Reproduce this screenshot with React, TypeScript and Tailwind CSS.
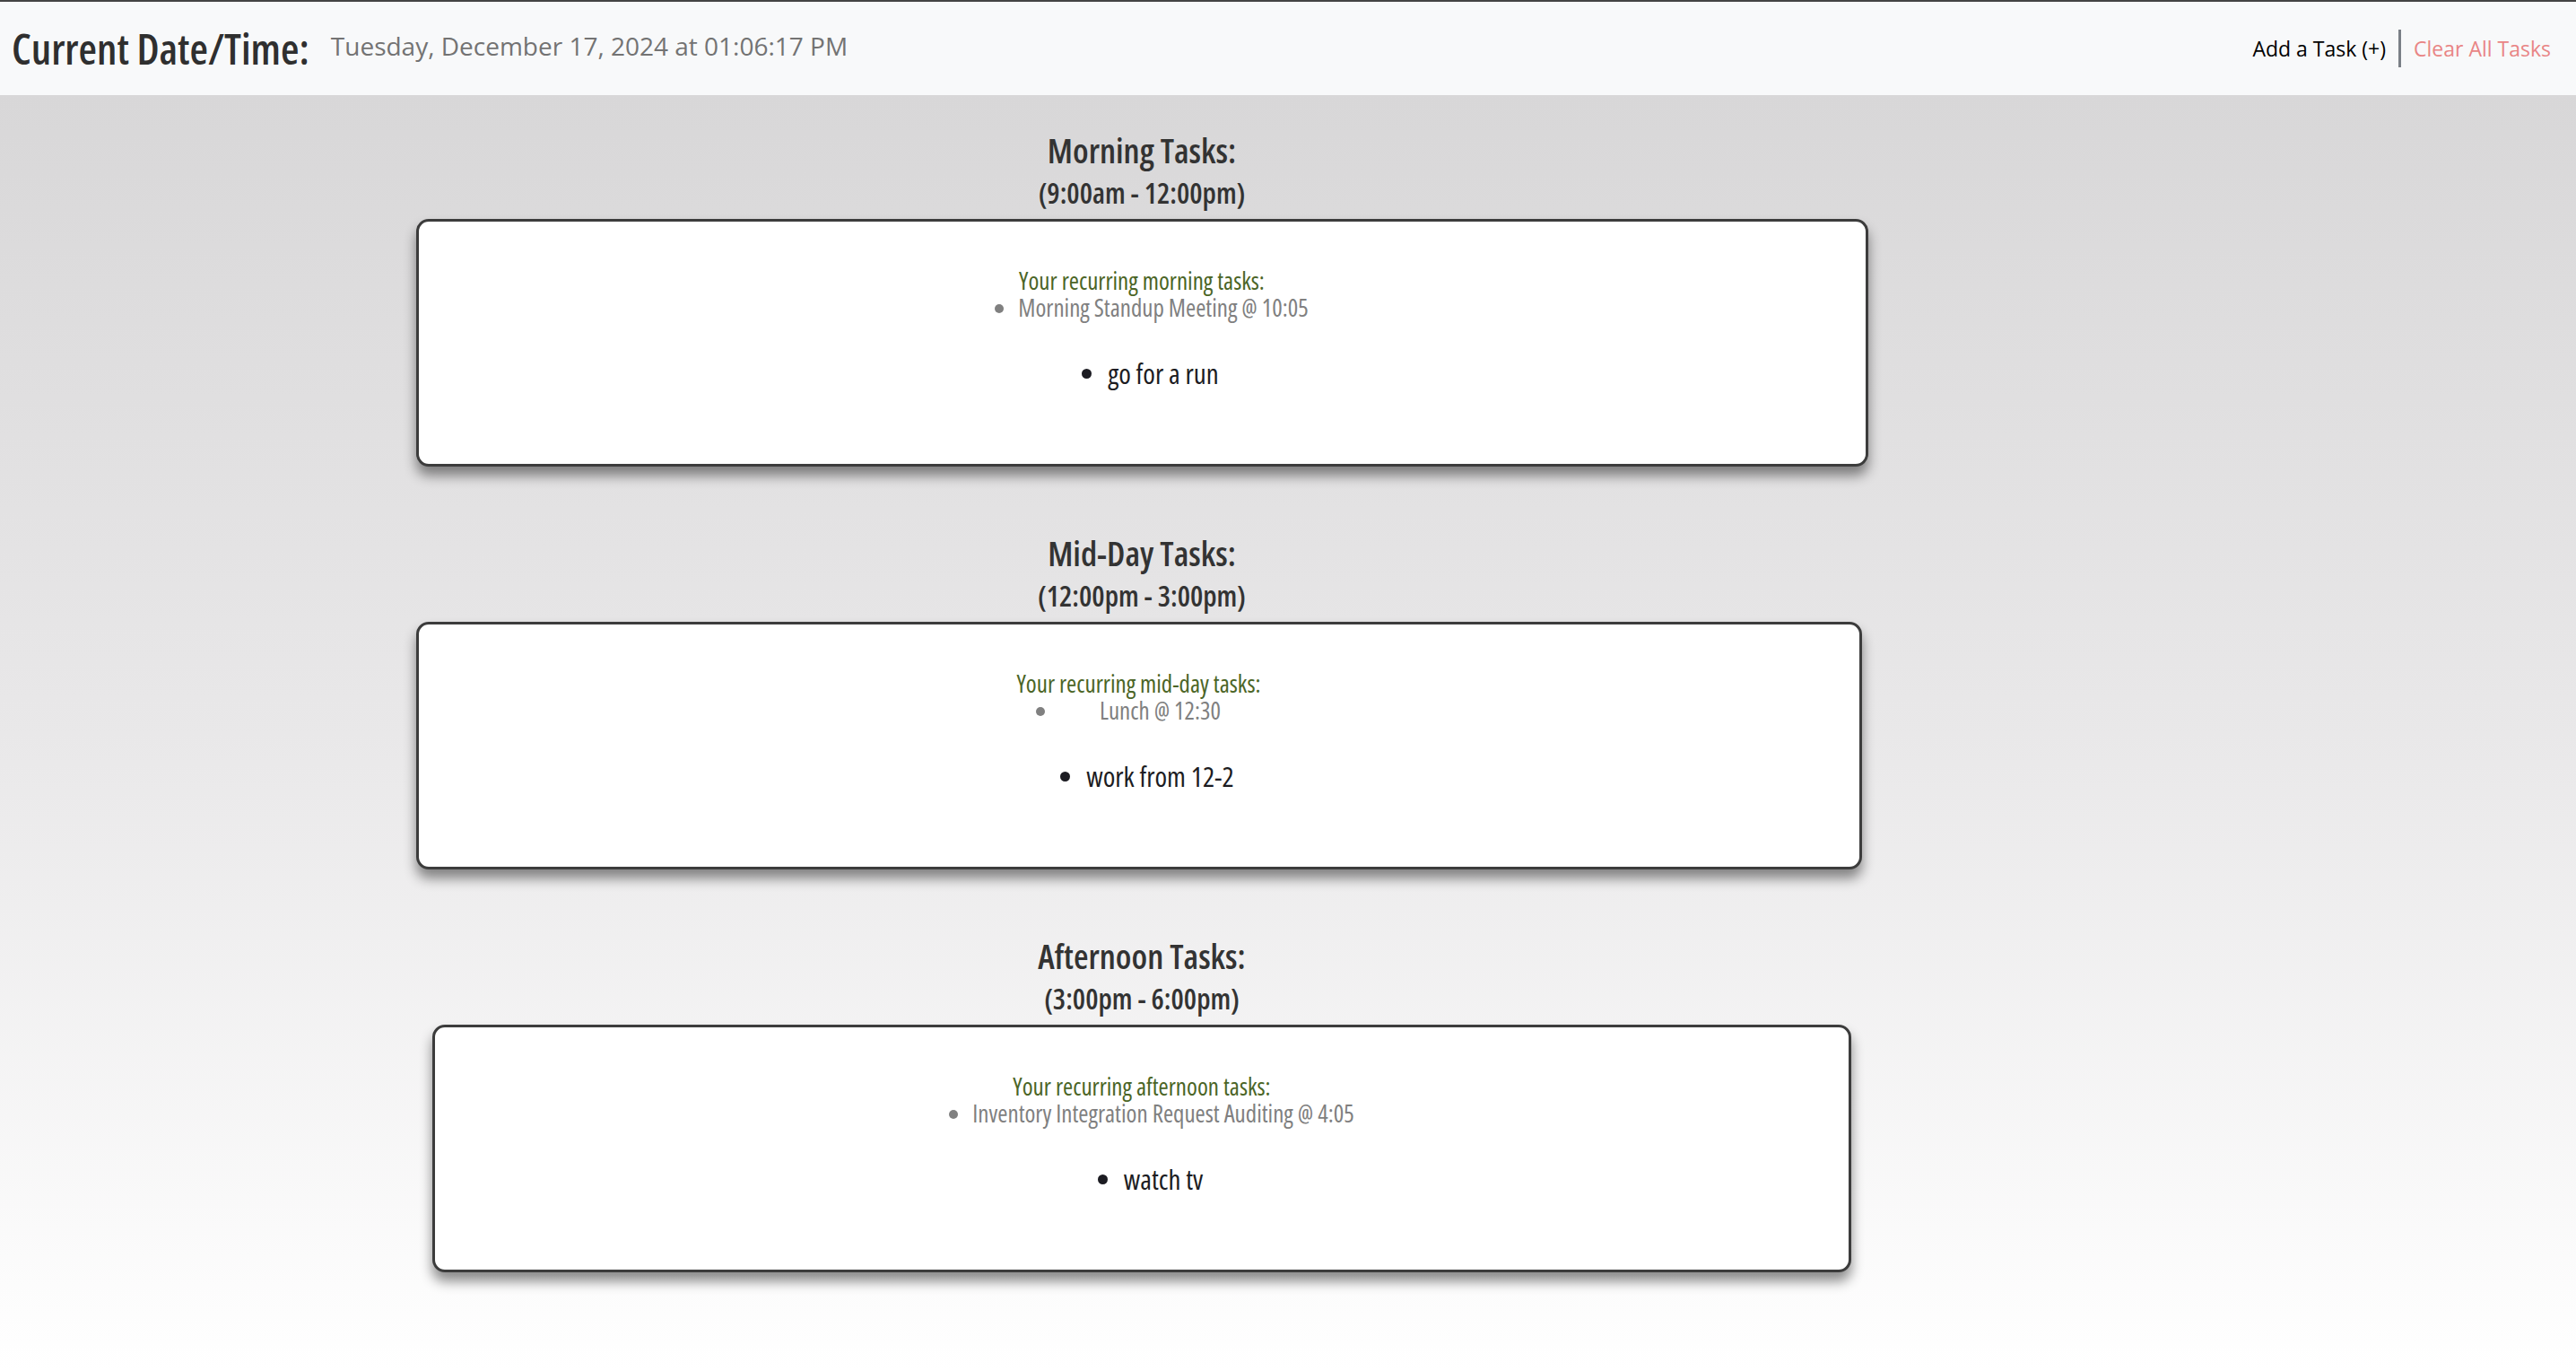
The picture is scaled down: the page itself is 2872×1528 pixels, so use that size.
type Slot = {
  title: string;
  range: string;
  recurringLabel: string;
  recurring: string;
  task: string;
  card: string;
};

const slots: Slot[] = [
  {
    title: 'Morning Tasks:',
    range: '(9:00am - 12:00pm)',
    recurringLabel: 'Your recurring morning tasks:',
    recurring: 'Morning Standup Meeting @ 10:05',
    task: 'go for a run',
    card: 'w-[1619px]',
  },
  {
    title: 'Mid-Day Tasks:',
    range: '(12:00pm - 3:00pm)',
    recurringLabel: 'Your recurring mid-day tasks:',
    recurring: 'Lunch @ 12:30',
    task: 'work from 12-2',
    card: 'w-[1612px] -ml-[7px]',
  },
  {
    title: 'Afternoon Tasks:',
    range: '(3:00pm - 6:00pm)',
    recurringLabel: 'Your recurring afternoon tasks:',
    recurring: 'Inventory Integration Request Auditing @ 4:05',
    task: 'watch tv',
    card: 'w-[1582px]',
  },
];

const TaskBlock = ({ slot }: { slot: Slot }) => (
  <section className="flex flex-col items-center">
    <h2 className="text-[38px] leading-[50px] font-semibold text-[#333]">{slot.title}</h2>
    <h3 className="text-[32px] leading-[46px] font-semibold text-[#333]">{slot.range}</h3>
    <div
      className={`${slot.card} h-[276px] mt-[6px] rounded-[14px] border-[3px] border-[#3c3c3c] bg-white shadow-[0_10px_14px_rgba(0,0,0,0.45)] flex flex-col items-center pt-[51px]`}
    >
      <div className="w-fit text-center text-[27px] leading-[30px] font-medium">
        <p className="text-[#4b6526]">{slot.recurringLabel}</p>
        <ul className="list-disc pl-[48px] text-[#808080]">
          <li className="text-center">{slot.recurring}</li>
        </ul>
      </div>
      <ul className="w-fit mt-[36px] list-disc pl-[48px] text-[31px] leading-[44px] text-[#1c1c22]">
        <li>{slot.task}</li>
      </ul>
    </div>
  </section>
);

export default function App() {
  return (
    <div className="min-h-screen flex flex-col font-['Open_Sans',sans-serif] font-stretch-condensed">
      <header className="h-[106px] border-t-2 border-[#444] bg-[#f8f9fa] flex items-center justify-between pl-[13px] pr-[28px]">
        <div className="flex items-center gap-[24px]">
          <h1 className="text-[47px] leading-[60px] font-semibold text-[#2f2f2f]">Current Date/Time:</h1>
          <span className="text-[28px] font-medium text-[#737373] font-stretch-normal mt-[-6px]">
            Tuesday, December 17, 2024 at 01:06:17 PM
          </span>
        </div>
        <nav className="flex items-center font-stretch-normal text-[23px]">
          <button className="text-black">Add a Task (+)</button>
          <span className="mx-[14px] w-[3px] h-[42px] bg-[#7a7f86]" />
          <button className="text-[#e98585]">Clear All Tasks</button>
        </nav>
      </header>
      <main className="flex-1 bg-gradient-to-b from-[#d8d7d8] via-[#e9e8e9] to-white pt-[36px] pb-[100px]">
        <div className="w-[2546px] flex flex-col items-center gap-[71px]">
          {slots.map((slot) => (
            <TaskBlock key={slot.title} slot={slot} />
          ))}
        </div>
      </main>
    </div>
  );
}
